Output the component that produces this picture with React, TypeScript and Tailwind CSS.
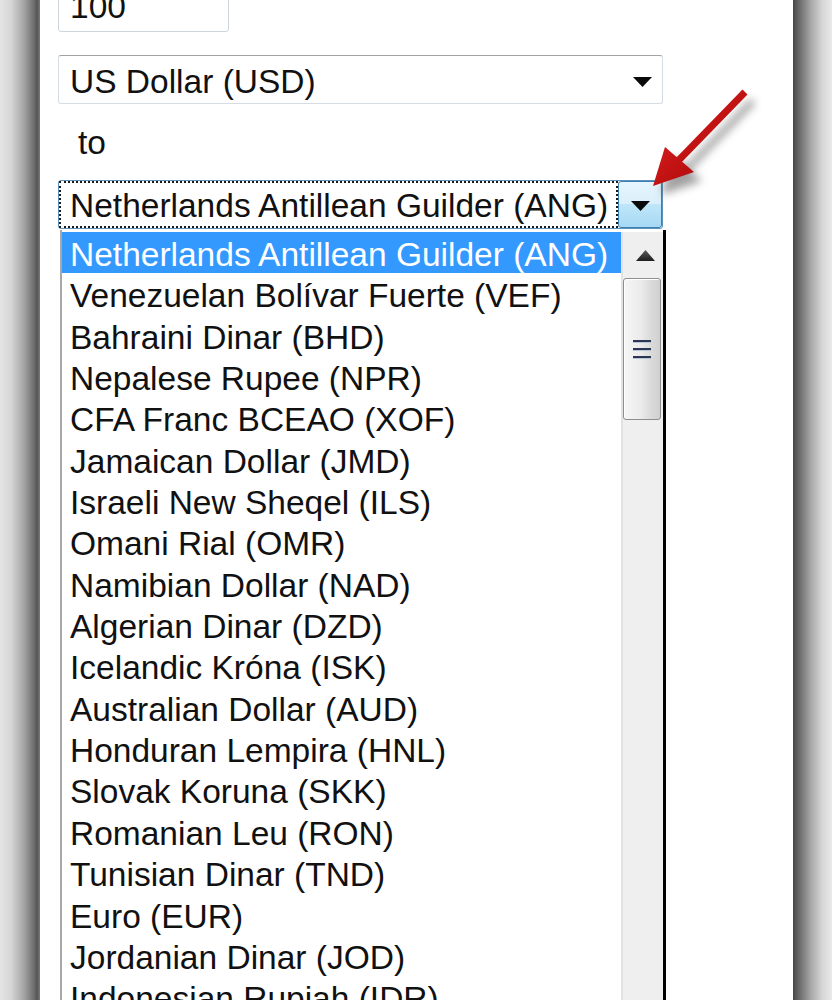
import React from "react";

const ITEMS = [
  "Netherlands Antillean Guilder (ANG)",
  "Venezuelan Bolívar Fuerte (VEF)",
  "Bahraini Dinar (BHD)",
  "Nepalese Rupee (NPR)",
  "CFA Franc BCEAO (XOF)",
  "Jamaican Dollar (JMD)",
  "Israeli New Sheqel (ILS)",
  "Omani Rial (OMR)",
  "Namibian Dollar (NAD)",
  "Algerian Dinar (DZD)",
  "Icelandic Króna (ISK)",
  "Australian Dollar (AUD)",
  "Honduran Lempira (HNL)",
  "Slovak Koruna (SKK)",
  "Romanian Leu (RON)",
  "Tunisian Dinar (TND)",
  "Euro (EUR)",
  "Jordanian Dinar (JOD)",
  "Indonesian Rupiah (IDR)",
  "Lithuanian Litas (LTL)",
];

function DownTri() {
  return (
    <svg width="19" height="10" viewBox="0 0 19 10" className="block">
      <polygon points="0,0 19,0 9.5,10" fill="#0a0a0a" />
    </svg>
  );
}

export default function App() {
  return (
    <div className="relative w-[832px] h-[1000px] overflow-hidden flex bg-white font-['Liberation_Sans',Arial,sans-serif] text-[33.5px] text-[#111]">
      <div className="w-[40px] shrink-0 bg-[linear-gradient(to_right,#e4e4e4_0%,#d6d6d6_28%,#a4a4a4_60%,#6e6e6e_85%,#555_93%,#7c7c7c_100%)]" />
      <div className="flex-1 flex flex-col pl-[18px]">
        <div className="mt-[-18px] w-[171px] h-[50px] border border-[#cdd4de] rounded-[3px] pl-[11px] leading-[48px]">
          100
        </div>
        <div className="mt-[23px] w-[605px] h-[49px] border border-[#d6dce6] border-t-[#a3a3a3] rounded-[3px] flex items-center justify-between">
          <span className="pl-[11px] pt-[4px] leading-[43px] self-start">US Dollar (USD)</span>
          <span className="mr-[10px] mt-[5px]">
            <DownTri />
          </span>
        </div>
        <div className="mt-[19px] h-[40px] leading-[40px] pl-[20px]">to</div>
        <div className="mt-[17px] w-[605px] h-[49px] border border-[#5d92bd] rounded-[3px] flex">
          <div className="w-[559px] h-full border-2 border-dotted border-[#1a1a1a] pl-[9px] leading-[45px] whitespace-nowrap">
            Netherlands Antillean Guilder (ANG)
          </div>
          <div className="flex-1 h-full border border-[#3c7fb1] rounded-[3px] bg-[linear-gradient(to_bottom,#e6f5fd_0%,#d9f0fc_48%,#bee6f8_50%,#a7d9f5_100%)] flex items-center justify-center">
            <span className="mt-[3px]">
              <DownTri />
            </span>
          </div>
        </div>
        <div className="mt-[1px] ml-[2px] w-[606px] flex-1 flex border-l-2 border-[#a8a8a8] border-r-[3px] border-r-[#000] pt-[2px]">
          <div className="w-[559px] flex flex-col">
            {ITEMS.map((it, i) => (
              <div
                key={it}
                className={
                  i === 0
                    ? "h-[41.35px] shrink-0 leading-[41.35px] pt-[2px] pl-[8px] bg-[#3399ff] text-white whitespace-nowrap"
                    : "h-[41.35px] shrink-0 leading-[41.35px] pt-[2px] pl-[8px] whitespace-nowrap"
                }
              >
                {it}
              </div>
            ))}
          </div>
          <div className="flex-1 bg-[#efefef] border-l-2 border-[#e2e2e2] flex flex-col">
            <div className="h-[46px] flex items-center justify-center pl-[4px]">
              <svg width="19" height="11" viewBox="0 0 19 11" className="block">
                <defs>
                  <linearGradient id="ua" x1="0" y1="0" x2="0" y2="1">
                    <stop offset="0" stopColor="#5a5a5a" />
                    <stop offset="1" stopColor="#1e1e1e" />
                  </linearGradient>
                </defs>
                <polygon points="9.5,0 19,11 0,11" fill="url(#ua)" />
              </svg>
            </div>
            <div className="w-[38px] h-[142px] border border-[#8e8e8e] rounded-[3px] bg-[linear-gradient(to_right,#f6f6f6_0%,#ececec_45%,#dadada_75%,#d0d0d0_100%)] shadow-[inset_1px_1px_0_#fff] flex flex-col items-center justify-center gap-[5px]">
              <div className="w-[18px] h-[3px] bg-[#2c3754] border-b border-[#b9c2d2]" />
              <div className="w-[18px] h-[3px] bg-[#2c3754] border-b border-[#b9c2d2]" />
              <div className="w-[18px] h-[3px] bg-[#2c3754] border-b border-[#b9c2d2]" />
            </div>
          </div>
        </div>
      </div>
      <div className="w-[39px] shrink-0 bg-[linear-gradient(to_right,#474747_0%,#6e6e6e_18%,#a6a6a6_45%,#d6d6d6_75%,#e9e9e9_100%)]" />
      <svg
        className="absolute left-[630px] top-[70px] pointer-events-none"
        width="150"
        height="150"
        viewBox="630 70 150 150"
      >
        <defs>
          <filter id="sh" x="-50%" y="-50%" width="200%" height="200%">
            <feGaussianBlur stdDeviation="4" />
          </filter>
          <linearGradient id="rd" x1="0" y1="0" x2="1" y2="1">
            <stop offset="0" stopColor="#d41a1a" />
            <stop offset="1" stopColor="#b00c0c" />
          </linearGradient>
        </defs>
        <g filter="url(#sh)" opacity="0.55" transform="translate(8,9)">
          <line x1="745" y1="92" x2="676" y2="163" stroke="#555" strokeWidth="7" />
          <polygon points="653,186 665,147 694,172" fill="#555" />
        </g>
        <line x1="745" y1="92" x2="676" y2="163" stroke="url(#rd)" strokeWidth="7" strokeLinecap="butt" />
        <polygon points="653,186 665,147 694,172" fill="url(#rd)" />
      </svg>
    </div>
  );
}
